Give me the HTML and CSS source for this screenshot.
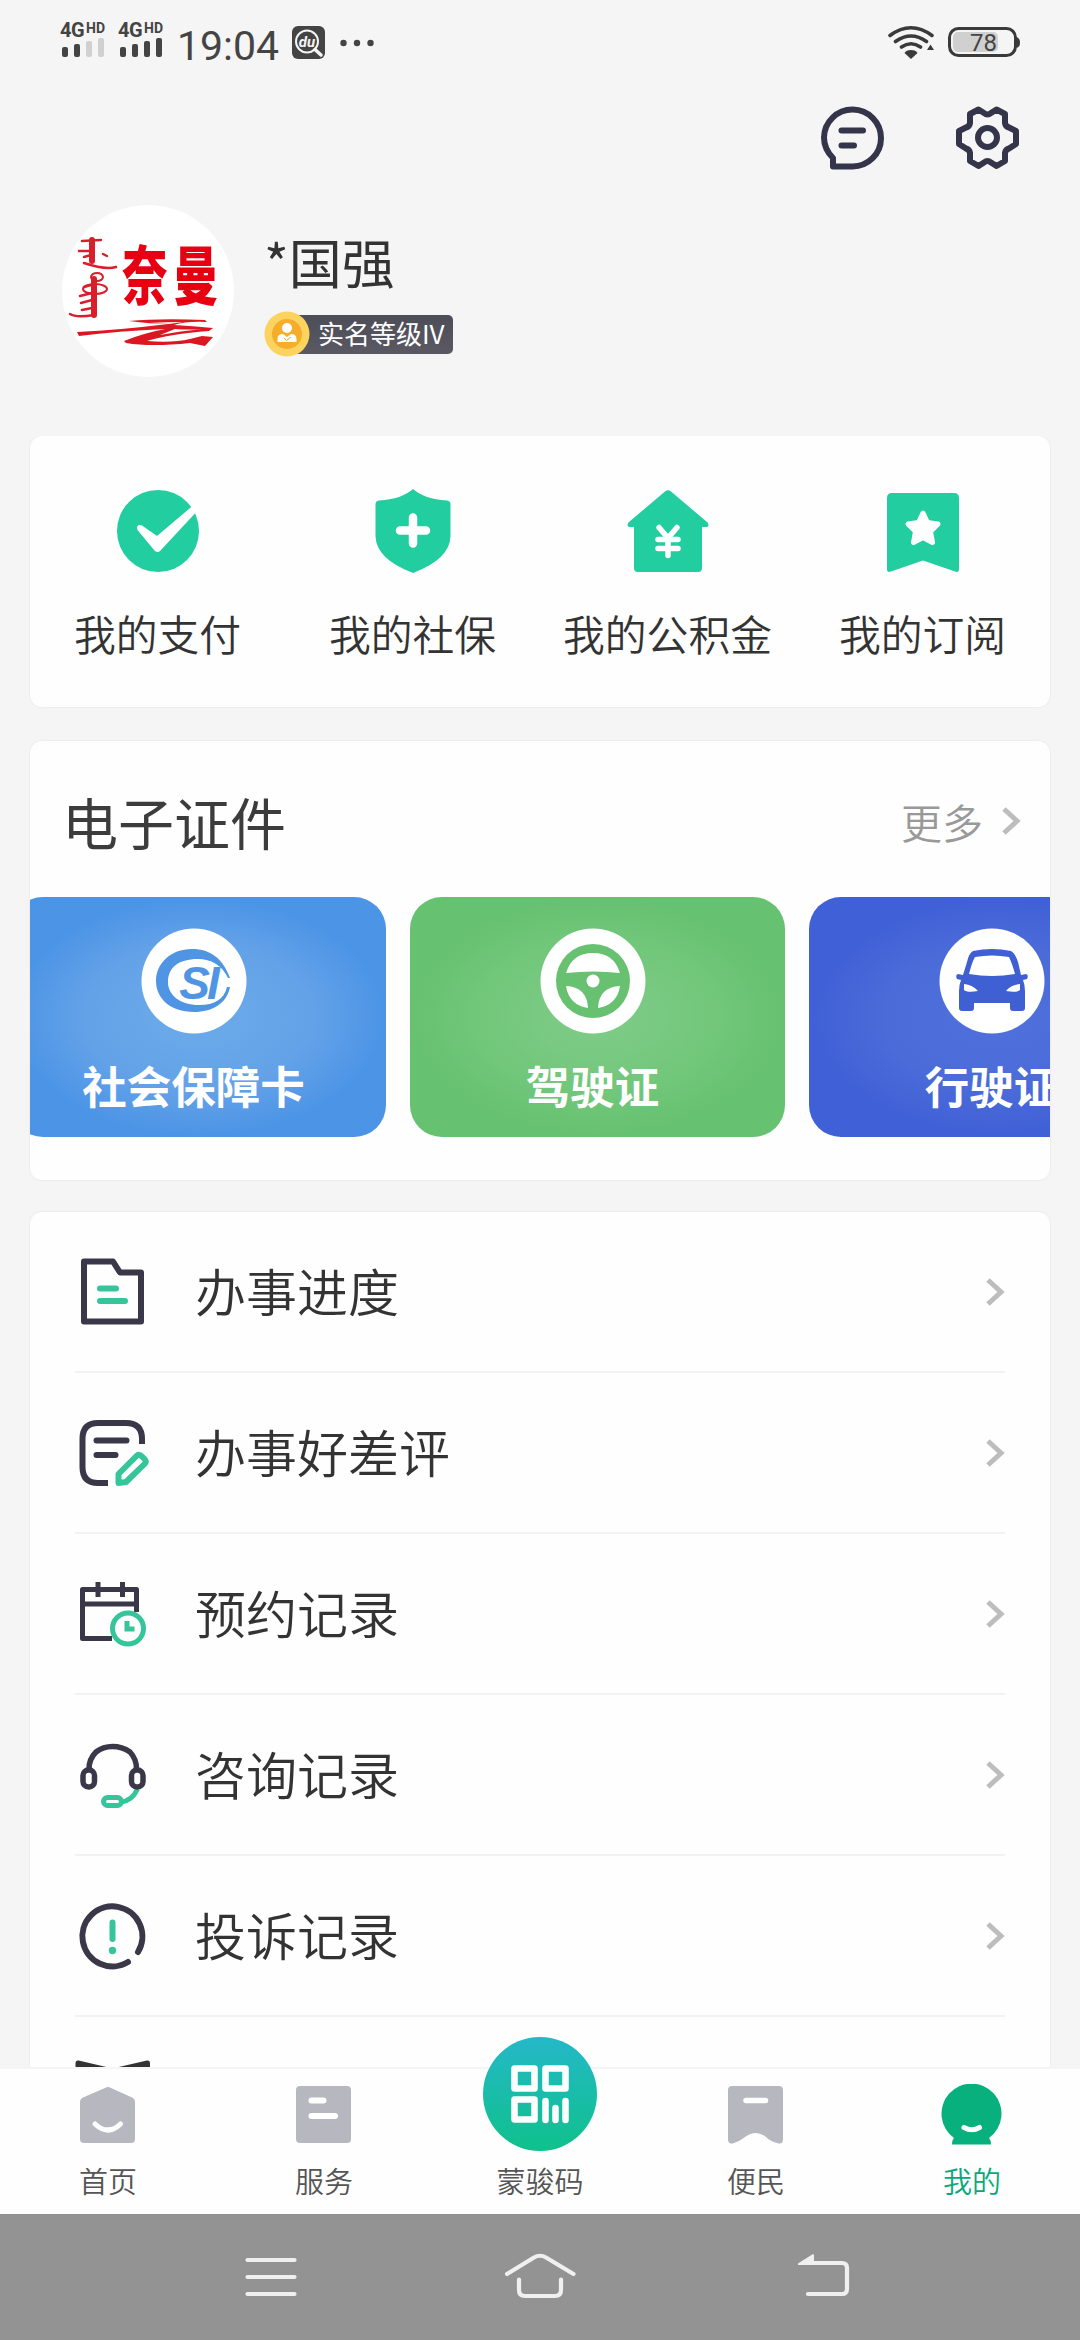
FILE: index.html
```html
<!DOCTYPE html>
<html lang="zh-CN">
<head>
<meta charset="utf-8">
<title>我的</title>
<link rel="stylesheet" href="styles.css">
</head>
<body>
<div class="phone">
  <header class="status">
    <div class="status-left">
      <div class="signal">
        <div class="net">4G<span class="hd">HD</span></div>
        <svg width="42" height="20" viewBox="0 0 42 20"><g fill="#444"><rect y="9" width="6" height="10" rx="2"/><rect x="12" y="6" width="6" height="13" rx="2"/></g><g fill="#d0d0d0"><rect x="24" y="3" width="6" height="16" rx="2"/><rect x="36" width="6" height="19" rx="2"/></g></svg>
      </div>
      <div class="signal">
        <div class="net">4G<span class="hd">HD</span></div>
        <svg width="42" height="20" viewBox="0 0 42 20" fill="#444"><rect y="9" width="6" height="10" rx="2"/><rect x="12" y="6" width="6" height="13" rx="2"/><rect x="24" y="3" width="6" height="16" rx="2"/><rect x="36" width="6" height="19" rx="2"/></svg>
      </div>
      <time class="clock">19:04</time>
      <svg class="du" width="33" height="33" viewBox="0 0 33 33"><rect width="33" height="33" rx="6" fill="#444"/><circle cx="15" cy="15.500" r="11" fill="none" stroke="#f5f5f5" stroke-width="2"/><path d="M23 23.500L29 29" stroke="#f5f5f5" stroke-width="3.500" stroke-linecap="round"/><text x="15" y="20.500" class="du-text">du</text></svg>
      <svg class="dots" width="34" height="8" viewBox="0 0 34 8" fill="#444"><circle cx="3.500" cy="4" r="3.200"/><circle cx="17" cy="4" r="3.200"/><circle cx="30.500" cy="4" r="3.200"/></svg>
    </div>
    <div class="status-right">
      <svg width="48" height="34" viewBox="887 24 48 34" fill="none" stroke="#3a3a3a" stroke-width="3.600" stroke-linecap="round"><path d="M890 34.500Q911 19 932 34.500M895.500 40.500Q911 29.500 926.500 40.500M901.500 46Q911 39.500 920.500 46"/><path d="M911 49Q916 49 917.500 52L911 58L904.500 52Q906 49 911 49Z" fill="#3a3a3a" stroke="none"/><path d="M930.500 43.500L934 49H927Z" fill="#3a3a3a" stroke="none"/></svg>
      <svg width="72" height="30" viewBox="948 27 72 30"><rect x="953" y="32" width="45" height="20" rx="5" fill="#d0d0d0"/><rect x="949.500" y="28.500" width="66" height="27" rx="9" fill="none" stroke="#3a3a3a" stroke-width="3"/><path d="M1016.500 37Q1020 38 1020 42.500T1016.500 48Z" fill="#3a3a3a"/><text x="983.500" y="51" class="battery">78</text></svg>
    </div>
  </header>

  <div class="tools">
    <svg width="64" height="64" viewBox="821 106 64 64" fill="none" stroke="#34344a" stroke-width="6" stroke-linecap="round" stroke-linejoin="round"><path d="M833 158Q824 149 824 137.500A28.500 28.500 0 1 1 852.500 166.500H833Z"/><path d="M841.500 130.500H863M841.500 145.500H854"/></svg>
    <svg width="64" height="64" viewBox="956 107 64 64" fill="none" stroke="#34344a" stroke-width="6" stroke-linejoin="round"><path d="M978.500 110.500L984 114Q987.500 117 991 114L996.500 110.500L1005 115V124Q1005.500 127.500 1009 128.500L1016 132V145L1009 149.500Q1005.500 150.500 1005 154V162L996.500 167L991 163.500Q987.500 160.500 984 163.500L978.500 167L970 162V154Q969.500 150.500 966 149.500L959 145V132L966 128.500Q969.500 127.500 970 124V115Z"/><circle cx="987.500" cy="138.500" r="9.500"/></svg>
  </div>

  <section class="profile">
    <svg class="avatar" width="172" height="172" viewBox="62 205 172 172">
      <circle cx="148" cy="291" r="86" fill="#fff"/>
      <g fill="none" stroke="#d8202c" stroke-linecap="round"><path d="M92 240V261M94 279V315" stroke-width="6"/><path d="M82 241L101 240M79 251H91M84 257L91 255M84 263Q105 270 116 267M103 254L107 256M84 287L91 285M80 296L92 293M81 303L92 300M82 310L92 308M70 314Q76 318 94 315" stroke-width="2.500"/><ellipse cx="97" cy="277" rx="6" ry="4" stroke-width="2"/><ellipse cx="95" cy="289" rx="12" ry="5" stroke-width="2"/></g>
      <g transform="translate(122 299) scale(.76 1.060)"><text class="brand" x="0" y="0">奈</text><text class="brand" x="67" y="0">曼</text></g>
      <path d="M129 321Q160 318 205 320L207 322Q186 321 174 325Q192 326 213 328L209 331Q170 334 147 341Q173 343 190 339L202 336L213 337L205 346L190 343Q151 347 126 343L124 341Q144 333 165 329Q118 331 79 336L77 332Q120 330 168 324Q151 324 129 321Z" fill="#dc1722"/>
      <path d="M175 329Q190 330 203 329Q180 331 160 335ZM149 323Q165 322 183 322L169 324Z" fill="#fff"/>
    </svg>
    <div class="identity">
      <h1 class="name">*国强</h1>
      <div class="level">
        <svg class="coin" width="46" height="46" viewBox="0 0 46 46"><circle cx="23" cy="23" r="22.500" fill="#fbd35e"/><circle cx="23" cy="23" r="15" fill="#f6ad2c"/><circle cx="23" cy="17" r="5" fill="#fff"/><path d="M13.500 31V28Q13.500 23 19 23L23 26L27 23Q32.500 23 32.500 28V31Z" fill="#fff"/><path d="M20 27L22.500 29.500L27 26" stroke="#f6ad2c" fill="none"/></svg>
        <span class="level-text">实名等级IV</span>
      </div>
    </div>
  </section>

  <main class="content">
    <section class="card quick">
      <a class="quick-item">
        <svg width="84" height="86" viewBox="115 488 84 86"><circle cx="157" cy="531" r="41" fill="#22cda0"/><path d="M136.500 530L153.500 550.500Q156.500 553.500 159.500 550.500L199 508L195 503L156 536L141 525.500Q137 524 136 527Z" fill="#fff"/></svg>
        <span>我的支付</span></a>
      <a class="quick-item">
        <svg width="84" height="86" viewBox="370 488 84 86"><path d="M412 489Q423 499 446 500.500Q449.500 501 449.500 504V536Q449 559 412 573Q375 559 374.500 536V504Q374.500 501 378 500.500Q401 499 412 489Z" fill="#22cda0"/><path d="M412 517.500V543.500M399 530.500H425" stroke="#fff" stroke-width="8.500" stroke-linecap="round"/></svg>
        <span>我的社保</span></a>
      <a class="quick-item">
        <svg width="84" height="86" viewBox="625 488 84 86"><path d="M664 491.500Q667 489 670 491.500L706 522Q709 525 706 527H701V568Q701 572 697 572H637Q633 572 633 568V527H628Q625 525 628 522Z" fill="#22cda0"/><path d="M658 527.500L667 538L676 527.500M667 538V555.500M657 539.500H677M657 548.500H677" fill="none" stroke="#fff" stroke-width="5.500" stroke-linecap="round" stroke-linejoin="round"/></svg>
        <span>我的公积金</span></a>
      <a class="quick-item">
        <svg width="84" height="86" viewBox="880 488 84 86"><path d="M891 493H953Q958 493 958 498V569Q958 573 954 571.500L922 560.500L890 571.500Q886 573 886 569V498Q886 493 891 493Z" fill="#22cda0"/><path d="M922 513L926.500 522.500L937 524L929.500 531.500L931.500 542.500L922 537.500L912.500 542.500L914.500 531.500L907 524L917.500 522.500Z" fill="#fff" stroke="#fff" stroke-width="5" stroke-linejoin="round"/></svg>
        <span>我的订阅</span></a>
    </section>

    <section class="card certs">
      <div class="certs-head">
        <h2>电子证件</h2>
        <a class="more">更多<svg width="20" height="30" viewBox="0 0 20 30" class="chev"><path d="M3 3L16 15L3 27"/></svg></a>
      </div>
      <div class="tiles">
        <a class="tile tile-blue">
          <svg width="106" height="106" viewBox="0 0 106 106"><circle cx="53" cy="53" r="52.500" fill="#fff"/><path d="M89 50C82 31 70 21 51 21C29 21 15 36 15 53C15 70 29 84 53 84C72 84 86 75 89 59L86 59C83 71 74 77 58 77C39 77 27 67 27 54C27 40 37 31 57 31C70 31 81 37 87 50Z" fill="#4f95e3"/><text x="57" y="71" class="si">SI</text></svg>
          <span>社会保障卡</span></a>
        <a class="tile tile-green">
          <svg width="106" height="106" viewBox="0 0 106 106"><circle cx="53" cy="53" r="52.500" fill="#fff"/><circle cx="53" cy="53" r="37" fill="#68c171"/><path d="M26 45Q32 25 53 25T80 45Q53 42 26 45Z" fill="#fff"/><path d="M26 58Q47 59 48 80Q29 77 26 58ZM80 58Q59 59 58 80Q77 77 80 58Z" fill="#fff"/><circle cx="53" cy="53" r="6.500" fill="#fff"/></svg>
          <span>驾驶证</span></a>
        <a class="tile tile-indigo">
          <svg width="106" height="106" viewBox="0 0 106 106"><circle cx="53" cy="53" r="52.500" fill="#fff"/><path d="M34 23Q53 19 72 23Q76 25 79 34L82 47L87 46Q90 47 88 51L84 52Q86 57 86 63V80Q86 83 83 83H74Q71 83 71 80V75H35V80Q35 83 32 83H23Q20 83 20 80V63Q20 57 22 52L18 51Q16 47 19 46L24 47L28 34Q30 25 34 23Z" fill="#3f60d3"/><path d="M36 29Q53 26 70 29Q73 35 76 46Q53 50 30 46Q33 34 36 29ZM25 56Q34 57 39 63Q28 65 25 62ZM81 56Q72 57 67 63Q78 65 81 62Z" fill="#fff"/></svg>
          <span>行驶证</span></a>
      </div>
    </section>

    <section class="card list">
      <a class="row">
        <svg width="76" height="72" viewBox="74 1256 76 72" fill="none" stroke="#3a3848" stroke-width="6" stroke-linejoin="round" stroke-linecap="round"><path d="M84 1261.500H113L120 1272.500H141V1321.500H84Z"/><path d="M100 1288.500H116M100 1301H125" stroke="#36c59a"/></svg>
        <span class="label">办事进度</span><svg width="20" height="30" viewBox="0 0 20 30" class="chev"><path d="M3 3L16 15L3 27"/></svg></a>
      <a class="row">
        <svg width="76" height="72" viewBox="74 1416 76 72" fill="none" stroke="#3a3848" stroke-width="6"><path d="M142 1443V1438Q142 1422 126 1422H98Q82.500 1422 82.500 1438V1466Q82.500 1482 98 1482H108"/><path d="M96.500 1439.500H126.500M96.500 1454H115.500" stroke-linecap="round"/><path d="M118.500 1473L137 1454.500Q139.500 1453 142 1455.500L144.500 1458Q147 1460.500 144.500 1463L126 1481L118.500 1482Z" stroke="#36c59a" stroke-linejoin="round"/></svg>
        <span class="label">办事好差评</span><svg width="20" height="30" viewBox="0 0 20 30" class="chev"><path d="M3 3L16 15L3 27"/></svg></a>
      <a class="row">
        <svg width="76" height="72" viewBox="74 1578 76 72" fill="none" stroke="#3a3848" stroke-width="5"><path d="M112 1638.500H82.500V1589.500H136.500V1612M82.500 1604H136.500M98 1582V1597M122.500 1582V1597" stroke-linejoin="round"/><g stroke="#36c59a"><circle cx="128" cy="1628.500" r="15.500" fill="#fff"/><path d="M127 1621V1629H134.500"/></g></svg>
        <span class="label">预约记录</span><svg width="20" height="30" viewBox="0 0 20 30" class="chev"><path d="M3 3L16 15L3 27"/></svg></a>
      <a class="row">
        <svg width="76" height="72" viewBox="74 1738 76 72" fill="none" stroke="#3a3848" stroke-width="5.500"><path d="M137.500 1788Q132 1800 121 1801" stroke="#36c59a" stroke-width="5"/><rect x="103.500" y="1796.500" width="18" height="8" rx="4" stroke="#36c59a" stroke-width="5"/><path d="M89 1768Q89 1758 96 1751Q103 1745.500 112.500 1745.500T130 1751Q136.500 1758 136.500 1768"/><rect x="83" y="1769" width="11.500" height="17" rx="5.500"/><rect x="131.500" y="1769" width="11.500" height="17" rx="5.500"/></svg>
        <span class="label">咨询记录</span><svg width="20" height="30" viewBox="0 0 20 30" class="chev"><path d="M3 3L16 15L3 27"/></svg></a>
      <a class="row">
        <svg width="76" height="72" viewBox="74 1899 76 72" fill="none" stroke="#3a3848" stroke-width="6" stroke-linecap="round"><path d="M128 1961A30 30 0 1 1 138 1951"/><path d="M112.500 1921.500V1938" stroke="#36c59a"/><circle cx="112.500" cy="1949.500" r="3.700" fill="#36c59a" stroke="none"/></svg>
        <span class="label">投诉记录</span><svg width="20" height="30" viewBox="0 0 20 30" class="chev"><path d="M3 3L16 15L3 27"/></svg></a>
      <a class="row">
        <svg width="76" height="74" viewBox="74 2058 76 74" fill="none" stroke="#333" stroke-width="5" stroke-linejoin="round"><path d="M112.500 2069L78 2061V2120L112.500 2128L147.500 2120V2061Z"/></svg></a>
    </section>
  </main>

  <nav class="tabs">
    <a class="tab">
      <svg width="64" height="62" viewBox="76 2084 64 62"><path d="M105 2088Q108 2086 111 2088L132 2097.500Q135 2099 135 2102V2139Q135 2143 131 2143H84Q80 2143 80 2139V2102Q80 2099 83 2097.500Z" fill="#b7b7c0"/><path d="M95 2124Q108 2136 120.500 2124" fill="none" stroke="#fff" stroke-width="5" stroke-linecap="round"/></svg>
      <span>首页</span></a>
    <a class="tab">
      <svg width="64" height="62" viewBox="292 2084 64 62"><rect x="296" y="2086" width="55" height="57" rx="4" fill="#b7b7c0"/><path d="M311.500 2100.500H323.500M311.500 2116H335" stroke="#fff" stroke-width="6" stroke-linecap="round"/></svg>
      <span>服务</span></a>
    <a class="tab tab-code">
      <svg width="114" height="114" viewBox="483 2037 114 114"><defs><linearGradient id="code" x1="0" y1="0" x2="0" y2="1"><stop offset="0" stop-color="#24b8c8"/><stop offset="1" stop-color="#0fc18b"/></linearGradient></defs><circle cx="540" cy="2094" r="57" fill="url(#code)"/><g fill="none" stroke="#fff" stroke-width="6.500" stroke-linejoin="round"><rect x="514.500" y="2068.500" width="20" height="20"/><rect x="545.500" y="2068.500" width="20" height="20"/><rect x="514.500" y="2099.500" width="20" height="20"/><path d="M545.500 2101V2120M555.500 2108V2120M565.500 2101V2120" stroke-linecap="round"/></g></svg>
      <span>蒙骏码</span></a>
    <a class="tab">
      <svg width="64" height="62" viewBox="724 2084 64 62"><path d="M732 2086H779Q783 2086 783 2090V2139Q783 2145 777 2143Q770 2141 766 2137Q756 2129 745 2137Q740 2141 734 2143Q728 2145 728 2139V2090Q728 2086 732 2086Z" fill="#b7b7c0"/><path d="M746 2100.500H765.500" stroke="#fff" stroke-width="5.500" stroke-linecap="round"/></svg>
      <span>便民</span></a>
    <a class="tab active">
      <svg width="64" height="62" viewBox="940 2084 64 62"><path d="M954 2138A30 30 0 1 1 989 2138Q991 2140 991 2144.500H952Q952 2140 954 2138Z" fill="#08b07d"/><path d="M964 2127.500Q972 2132 979.500 2127.500" fill="none" stroke="#fff" stroke-width="5" stroke-linecap="round"/></svg>
      <span>我的</span></a>
  </nav>

  <footer class="sysnav">
    <svg width="52" height="50" viewBox="245 2252 52 50"><path d="M247.500 2260H294.500M247.500 2277H294.500M247.500 2294H294.500"/></svg>
    <svg class="sys-home" width="72" height="50" viewBox="505 2252 72 50"><path d="M508 2274L535 2257.500Q541 2254 547 2257.500L574.500 2274M520 2279.500V2290Q520 2296 526 2296H556Q562 2296 562 2290V2279.500"/></svg>
    <svg width="52" height="50" viewBox="798 2252 52 50"><path d="M808 2263H842Q847 2263 847 2268V2289Q847 2294 842 2294H808"/><path class="tip" d="M798 2263.500L813 2254Q814 2254 814 2256V2265H799Q797 2265 798 2263.500Z"/></svg>
  </footer>
</div>
</body>
</html>
```
FILE: styles.css
```css
* { box-sizing: border-box; }
body {
  margin: 0;
  background: #f5f5f5;
  color: #333;
  font-family: "Noto Sans CJK SC", sans-serif;
}
h1, h2 { margin: 0; font-weight: 400; }
svg { display: block; flex: none; }
.phone {
  width: 1080px;
  height: 2340px;
  display: flex;
  flex-direction: column;
  overflow: hidden;
}

/* status bar */
.status {
  height: 84px;
  padding: 0 60px;
  display: flex;
  justify-content: space-between;
  align-items: center;
}
.status-left, .status-right { display: flex; align-items: center; }
.status-right { gap: 13px; }
.signal { width: 58px; height: 38px; margin-top: -4px; }
.signal svg { margin-left: 2px; }
.net {
  display: flex;
  align-items: flex-start;
  gap: 2px;
  height: 17px;
  font: 700 20px/19px Roboto, sans-serif;
  letter-spacing: -.5px;
  color: #444;
}
.hd { font-size: 14px; line-height: 15px; letter-spacing: 0; }
.clock {
  width: 116px;
  padding-left: 1px;
  font: 400 41px/48px Roboto, sans-serif;
  color: #444;
  margin-top: 7px;
}
.du-text {
  font: italic 700 15px Roboto, sans-serif;
  fill: #f5f5f5;
  text-anchor: middle;
}
.dots { margin-left: 15px; margin-top: 2px; }
.battery {
  font: 400 24px Roboto, sans-serif;
  fill: #444;
  text-anchor: middle;
}

.tools {
  height: 106px;
  padding: 22px 60px 0 0;
  display: flex;
  justify-content: flex-end;
  gap: 71px;
}

/* profile */
.profile {
  height: 246px;
  padding: 15px 0 0 62px;
  display: flex;
  gap: 30px;
}
.brand { font: 900 60px "Noto Sans CJK SC", sans-serif; fill: #e60012; }
.name {
  height: 60px;
  margin-top: 26px;
  font-size: 53px;
  line-height: 60px;
}
.level { display: flex; align-items: center; margin-top: 20px; height: 46px; }
.level-text {
  height: 39px;
  width: 168px;
  margin-left: -25px;
  padding-left: 33px;
  border-radius: 0 5px 5px 0;
  background: linear-gradient(#4d4d58, #5a5963);
  color: #fff;
  font-size: 26px;
  line-height: 36px;
  white-space: nowrap;
}
.coin { position: relative; }

/* cards */
.content {
  flex: 1;
  min-height: 0;
  overflow: hidden;
  padding: 0 30px;
  display: flex;
  flex-direction: column;
  gap: 34px;
}
.card {
  flex: none;
  background: #fefefe;
  border-radius: 12px;
  box-shadow: 0 0 2px #dedede;
  overflow: hidden;
}
.quick {
  height: 271px;
  padding-top: 52px;
  display: grid;
  grid-template-columns: repeat(4, 1fr);
}
.quick-item {
  display: flex;
  flex-direction: column;
  align-items: center;
  gap: 29px;
  font-size: 41.800px;
  line-height: 60px;
  white-space: nowrap;
}
.quick-item span { font-weight: 350; }
.certs { height: 439px; }
.certs-head {
  height: 156px;
  padding: 4px 29px 0 32px;
  display: flex;
  justify-content: space-between;
  align-items: center;
}
.certs-head h2 { font-size: 56px; line-height: 70px; color: #3c3c3c; }
.more {
  display: flex;
  align-items: center;
  gap: 18px;
  color: #999;
  font-size: 41px;
  font-weight: 350;
  line-height: 60px;
}
.more .chev { margin-top: -1px; }
.chev {
  fill: none;
  stroke: #bdbdbd;
  stroke-width: 5;
}
.tiles { display: flex; gap: 24px; margin-left: -19px; }
.tile {
  flex: none;
  width: 375px;
  height: 240px;
  padding: 31px 10px 0 0;
  border-radius: 32px;
  display: flex;
  flex-direction: column;
  align-items: center;
  gap: 19px;
  color: #fff;
  font-size: 44.500px;
  font-weight: 700;
  line-height: 64px;
}
.tile-blue { background: radial-gradient(closest-side, #6cabe9, #64a2e8 60%, #4b94e6); }
.tile-green { background: radial-gradient(closest-side, #80cc89, #72c77b 60%, #66c170); }
.tile-indigo { background: radial-gradient(closest-side, #5070dc, #4b6bd9 60%, #3f60d6); }
.si {
  font: italic 700 46px "Liberation Sans", sans-serif;
  letter-spacing: -3px;
  fill: #4f95e3;
  text-anchor: middle;
}

.list { padding: 0 45px; margin-top: -2px; }
.row {
  height: 161px;
  border-bottom: 2px solid #f2f2f2;
  display: flex;
  align-items: center;
}
.row svg:first-child { margin-left: -1px; }
.label {
  flex: 1;
  margin-left: 45px;
  margin-top: -3px;
  font-size: 51px;
  font-weight: 350;
  line-height: 70px;
}

/* bottom tabs */
.tabs {
  flex: none;
  height: 147px;
  border-top: 2px solid #f5f5f5;
  background: #fefefe;
  display: grid;
  grid-template-columns: repeat(5, 1fr);
  align-items: end;
}
.tab {
  display: flex;
  flex-direction: column;
  align-items: center;
  gap: 14px;
  padding-bottom: 14px;
  font-size: 29px;
  font-weight: 350;
  line-height: 40px;
  color: #555;
}
.tab-code { gap: 9px; margin-top: -40px; position: relative; }
.active { color: #08a87a; }

.sysnav {
  flex: none;
  height: 126px;
  padding: 38px 230px 0 245px;
  background: #939393;
  display: flex;
  justify-content: space-between;
}
.sys-home { margin-right: 15px; }
.sysnav path {
  fill: none;
  stroke: #f0f0f0;
  stroke-width: 4.200;
  stroke-linecap: round;
}
.sysnav .tip { fill: #f0f0f0; stroke: none; }
```
